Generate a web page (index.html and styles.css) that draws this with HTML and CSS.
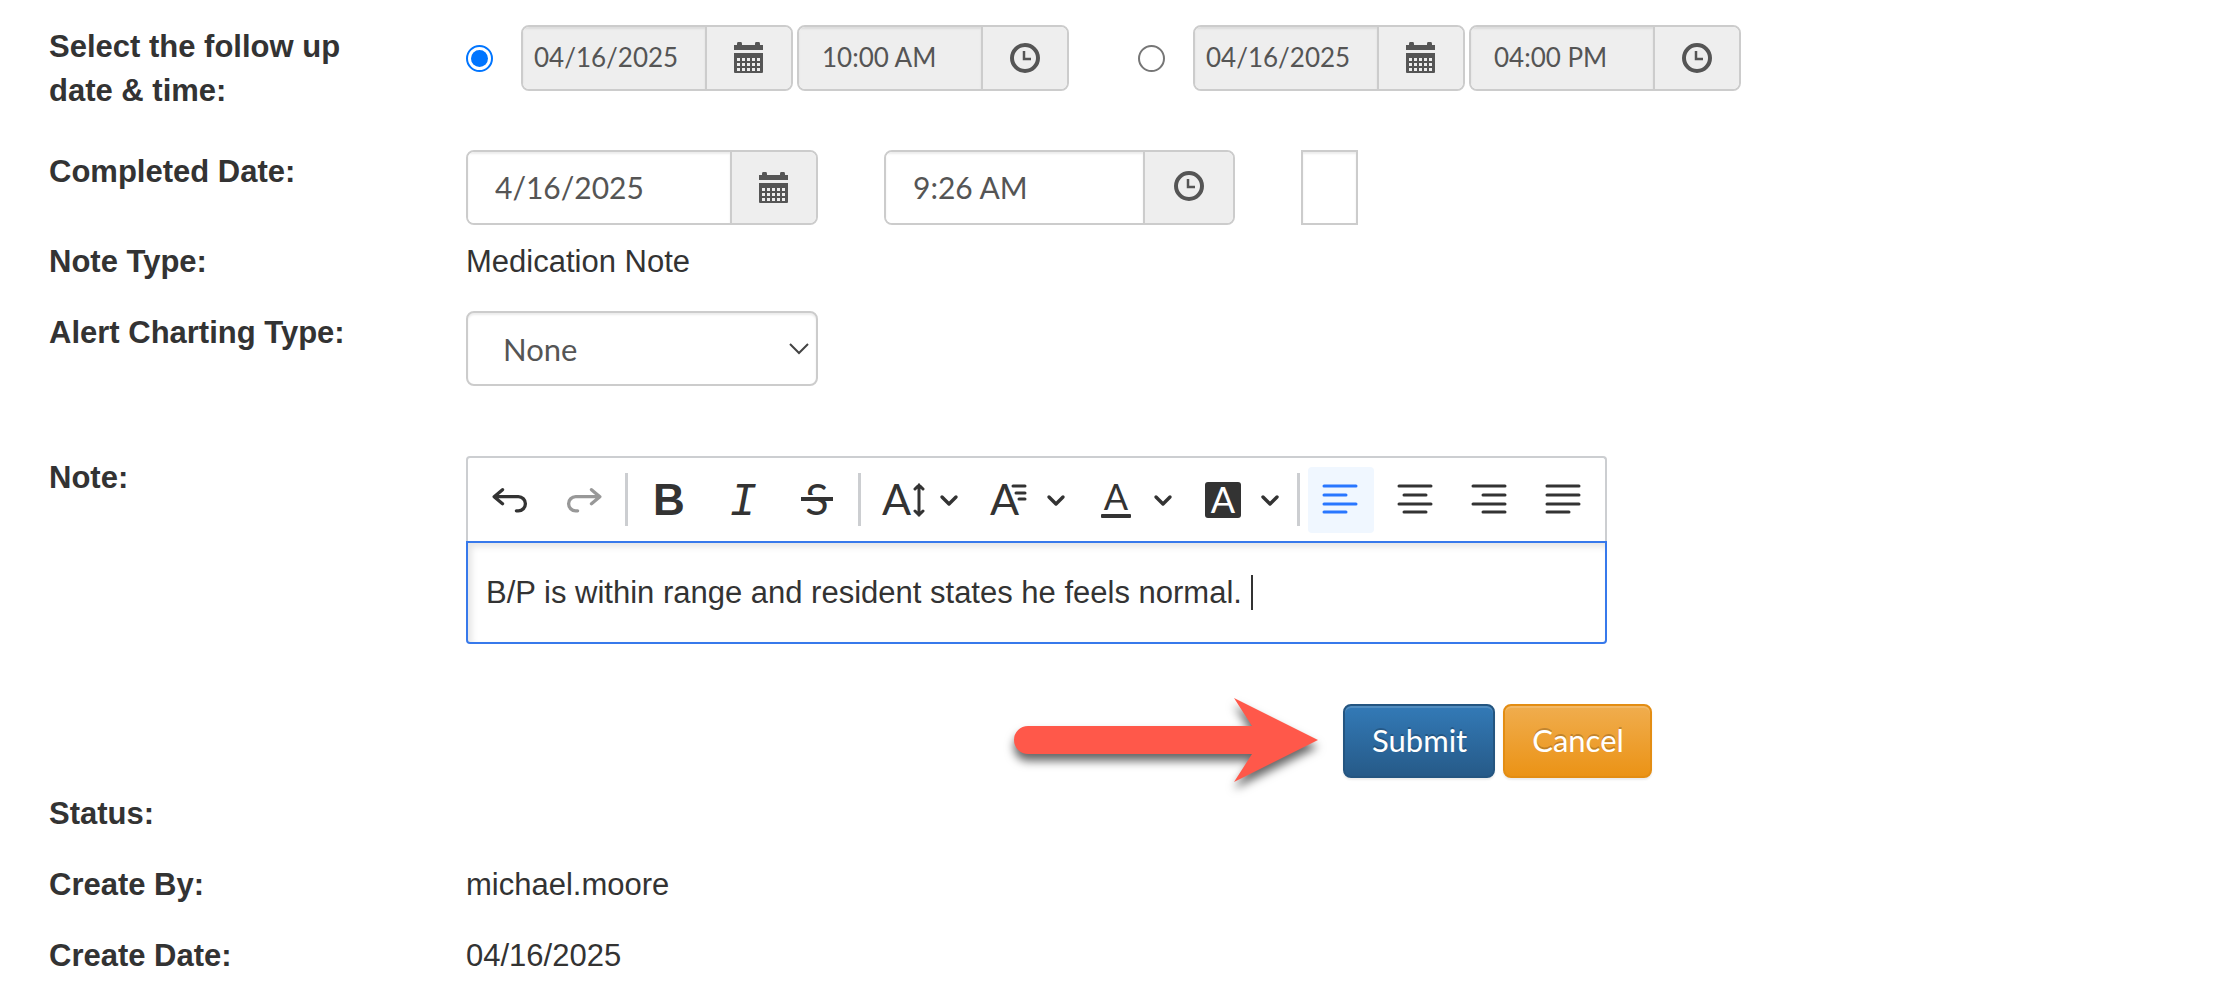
FILE: index.html
```html
<!DOCTYPE html>
<html lang="en">
<head>
    <meta charset="UTF-8">
    <meta name="viewport" content="width=device-width, initial-scale=1.0">
    <title>Follow Up Note</title>
    <link rel="stylesheet" href="styles.css">
</head>
<body>
    <!-- shared icons -->
    <svg class="sprite" aria-hidden="true">
        <symbol id="calendar" viewBox="0 0 30 32">
            <path d="M0 3h3V2a2 2 0 0 1 5 0v1h13V2a2 2 0 0 1 5 0v1h3v5H0z"/>
            <path fill-rule="evenodd" d="M0 11h29v19a1 1 0 0 1-1 1H1a1 1 0 0 1-1-1zM3 16v3h3v-3zm5 0v3h3v-3zm5 0v3h3v-3zm5 0v3h3v-3zm5 0v3h3v-3zM3 21v3h3v-3zm5 0v3h3v-3zm5 0v3h3v-3zm5 0v3h3v-3zm5 0v3h3v-3zM3 26v3h3v-3zm5 0v3h3v-3zm5 0v3h3v-3zm5 0v3h3v-3zm5 0v3h3v-3z"/>
        </symbol>
        <symbol id="clock" viewBox="0 0 30 30">
            <circle cx="15" cy="15" r="13" fill="none" stroke="currentColor" stroke-width="4"/>
            <path d="M14 8v8h7" fill="none" stroke="currentColor" stroke-width="2.500"/>
        </symbol>
        <symbol id="chevron" viewBox="0 0 20 14">
            <path d="M3 4l7 7 7-7" fill="none" stroke="currentColor" stroke-width="3.400" stroke-linecap="round" stroke-linejoin="round"/>
        </symbol>
    </svg>

    <form class="note-form" id="form">
        <div class="row row-followup">
            <div class="label" id="followup-label">Select the follow up date &amp; time:</div>
            <div class="followup" role="radiogroup" aria-labelledby="followup-label">
                <div class="option">
                    <input class="radio" type="radio" name="followup" id="followup1" aria-label="First follow up" checked>
                    <div class="group group-sm">
                        <input class="field field-date" type="text" value="04/16/2025" aria-label="First follow up date" readonly>
                        <button class="addon" type="button" aria-label="Pick date"><svg class="icon-calendar"><use href="#calendar"/></svg></button>
                    </div>
                    <div class="group group-sm">
                        <input class="field" type="text" value="10:00 AM" aria-label="First follow up time" readonly>
                        <button class="addon" type="button" aria-label="Pick time"><svg class="icon-clock"><use href="#clock"/></svg></button>
                    </div>
                </div>
                <div class="option">
                    <input class="radio" type="radio" name="followup" id="followup2" aria-label="Second follow up">
                    <div class="group group-sm">
                        <input class="field field-date" type="text" value="04/16/2025" aria-label="Second follow up date" readonly>
                        <button class="addon" type="button" aria-label="Pick date"><svg class="icon-calendar"><use href="#calendar"/></svg></button>
                    </div>
                    <div class="group group-sm">
                        <input class="field" type="text" value="04:00 PM" aria-label="Second follow up time" readonly>
                        <button class="addon" type="button" aria-label="Pick time"><svg class="icon-clock"><use href="#clock"/></svg></button>
                    </div>
                </div>
            </div>
        </div>

        <div class="row row-completed">
            <label class="label" for="completed">Completed Date:</label>
            <div class="completed">
                <div class="group">
                    <input class="field" type="text" id="completed" value="4/16/2025">
                    <button class="addon" type="button" aria-label="Pick date"><svg class="icon-calendar"><use href="#calendar"/></svg></button>
                </div>
                <div class="group group-time">
                    <input class="field" type="text" value="9:26 AM" aria-label="Completed time">
                    <button class="addon" type="button" aria-label="Pick time"><svg class="icon-clock"><use href="#clock"/></svg></button>
                </div>
                <input class="field-box" type="text" aria-label="Initials">
            </div>
        </div>

        <div class="row">
            <div class="label">Note Type:</div>
            <div class="value">Medication Note</div>
        </div>

        <div class="row row-alert">
            <label class="label" for="alert">Alert Charting Type:</label>
            <div class="select">
                <select id="alert">
                    <option>None</option>
                </select>
                <svg class="select-arrow" viewBox="0 0 20 12"><path d="M1 1l9 9 9-9"/></svg>
            </div>
        </div>

        <div class="row row-note">
            <div class="label" id="note-label">Note:</div>
            <div class="editor">
                <div class="toolbar" role="toolbar" aria-label="Editor toolbar">
                    <button class="tool" type="button" aria-label="Undo">
                        <svg viewBox="0 0 20 20"><path class="line" d="M6.600 5.300L2.800 8.500l3.800 3.200M3 8.500h10.800a3.200 3.200 0 0 1 0 6.400h-.9"/></svg>
                    </button>
                    <button class="tool" type="button" aria-label="Redo" disabled>
                        <svg viewBox="0 0 20 20"><path class="line" d="M13.400 5.300l3.800 3.200-3.800 3.200M17 8.500H6.200a3.200 3.200 0 0 0 0 6.400h.9"/></svg>
                    </button>
                    <span class="separator"></span>
                    <button class="tool" type="button" aria-label="Bold">
                        <svg viewBox="0 0 44 44"><text class="glyph-bold" x="22" y="37" text-anchor="middle">B</text></svg>
                    </button>
                    <button class="tool" type="button" aria-label="Italic">
                        <svg viewBox="0 0 44 44"><text class="glyph-italic" x="22" y="37" text-anchor="middle">I</text></svg>
                    </button>
                    <button class="tool" type="button" aria-label="Strikethrough">
                        <svg viewBox="0 0 44 44"><text class="glyph" x="22" y="37" text-anchor="middle">S</text><path fill="#fff" d="M6 17h32v3H6zM6 22h17v4H6z"/><path d="M6 19h32v4H6z"/></svg>
                    </button>
                    <span class="separator"></span>
                    <button class="tool tool-menu" type="button" aria-label="Font Size">
                        <svg viewBox="0 0 44 44"><text class="glyph" x="2" y="37">A</text><path class="thin" d="M39 7v30M35 11l4-4 4 4M35 33l4 4 4-4"/></svg>
                        <svg class="chevron"><use href="#chevron"/></svg>
                    </button>
                    <button class="tool tool-menu" type="button" aria-label="Font Family">
                        <svg viewBox="0 0 44 44"><text class="glyph" x="3" y="37">A</text><path class="thin" d="M26 8h12M29 15h9M32 21h6"/></svg>
                        <svg class="chevron"><use href="#chevron"/></svg>
                    </button>
                    <button class="tool tool-menu" type="button" aria-label="Font Color">
                        <svg viewBox="0 0 44 44"><text class="glyph-small" x="22" y="32" text-anchor="middle">A</text><rect x="7" y="36" width="30" height="4" rx="1"/></svg>
                        <svg class="chevron"><use href="#chevron"/></svg>
                    </button>
                    <button class="tool tool-menu" type="button" aria-label="Font Background Color">
                        <svg viewBox="0 0 44 44"><rect x="4" y="4" width="36" height="36" rx="3"/><text class="glyph-small" fill="#fff" x="22" y="35" text-anchor="middle">A</text></svg>
                        <svg class="chevron"><use href="#chevron"/></svg>
                    </button>
                    <span class="separator"></span>
                    <button class="tool active" type="button" aria-label="Align left">
                        <svg viewBox="0 0 44 44"><path class="bars" d="M5 8h32M5 17h22M5 26h32M5 34h22"/></svg>
                    </button>
                    <button class="tool" type="button" aria-label="Align center">
                        <svg viewBox="0 0 44 44"><path class="bars" d="M6 8h32M11 17h22M6 26h32M11 34h22"/></svg>
                    </button>
                    <button class="tool" type="button" aria-label="Align right">
                        <svg viewBox="0 0 44 44"><path class="bars" d="M6 8h32M16 17h22M6 26h32M16 34h22"/></svg>
                    </button>
                    <button class="tool" type="button" aria-label="Justify">
                        <svg viewBox="0 0 44 44"><path class="bars" d="M6 8h32M6 17h32M6 26h32M6 34h22"/></svg>
                    </button>
                </div>
                <div class="editable" contenteditable="true" role="textbox" aria-labelledby="note-label">B/P is within range and resident states he feels normal.&nbsp;<span class="caret"></span></div>
            </div>
        </div>

        <div class="actions">
            <svg class="arrow" viewBox="0 0 304 90" aria-hidden="true">
                <path d="M14 30h224L220 2l84 42-84 42 18-28H14a14 14 0 0 1 0-28z"/>
            </svg>
            <div class="buttons">
                <button class="btn btn-primary" type="submit">Submit</button>
                <button class="btn btn-warning" type="button">Cancel</button>
            </div>
        </div>

        <div class="row">
            <div class="label">Status:</div>
            <div class="value"></div>
        </div>
        <div class="row">
            <div class="label">Create By:</div>
            <div class="value">michael.moore</div>
        </div>
        <div class="row">
            <div class="label">Create Date:</div>
            <div class="value">04/16/2025</div>
        </div>
    </form>
</body>
</html>
```

FILE: styles.css
```css
* {
    box-sizing: border-box;
}

body {
    margin: 0;
    background-color: #fff;
    color: #333;
    font-family: "Liberation Sans", Arial, sans-serif;
    font-size: 31px;
    line-height: 44px;
}

input, select, button {
    margin: 0;
    font-family: Lato, sans-serif;
    font-size: 31px;
    color: #555;
}

svg {
    display: block;
    fill: currentColor;
}

.sprite {
    display: none;
}

.note-form {
    padding: 25px 49px;
}

.row {
    display: grid;
    grid-template-columns: 417px 1fr;
    align-items: start;
    margin-bottom: 27px;
}

.row-followup {
    margin-bottom: 37px;
}

.row-completed {
    margin-bottom: 15px;
}

.row-alert {
    margin-bottom: 70px;
}

.row-note {
    margin-bottom: 60px;
}

.label {
    padding-right: 80px;
    font-weight: bold;
}

/* inputs with a picker button */
.followup {
    display: flex;
    flex-wrap: wrap;
    gap: 69px;
}

.option {
    display: flex;
    align-items: center;
    gap: 4px;
}

.radio {
    width: 27px;
    height: 27px;
    margin: 0 24px 0 0;
    border: 2px solid #767676;
    border-radius: 50%;
    background-color: #fff;
    appearance: none;
}

.radio:checked {
    padding: 3px;
    border-color: #0075ff;
    background-color: #0075ff;
    background-clip: content-box;
}

.completed {
    display: flex;
    flex-wrap: wrap;
    gap: 66px;
}

.group {
    display: flex;
    width: 352px;
    height: 75px;
    border: 2px solid #ccc;
    border-radius: 8px;
    overflow: hidden;
}

.field {
    flex: 1;
    min-width: 0;
    padding: 0 0 2px 27px;
    border: 0;
    background-color: #fff;
    box-shadow: inset 0 2px 2px rgba(0, 0, 0, 0.075);
    font-size: 30px;
}

.addon {
    display: flex;
    justify-content: center;
    align-items: center;
    width: 86px;
    padding: 0;
    border: 0;
    border-left: 2px solid #ccc;
    background-color: #eee;
}

.group-time {
    width: 351px;
}

.group-time .addon {
    width: 90px;
    padding-bottom: 3px;
}

.group-sm {
    width: 272px;
    height: 66px;
}

.group-sm .field {
    padding-left: 23px;
    background-color: #eee;
    font-size: 26px;
}

.group-sm .field-date {
    padding-left: 11px;
}

.icon-calendar {
    width: 30px;
    height: 32px;
}

.icon-clock {
    width: 30px;
    height: 30px;
}

.field-box {
    width: 57px;
    height: 75px;
    border: 2px solid #ccc;
    box-shadow: inset 0 2px 2px rgba(0, 0, 0, 0.075);
}

.select {
    display: grid;
    align-items: center;
    width: 352px;
}

.select select {
    grid-area: 1 / 1;
    height: 75px;
    padding: 0 35px;
    border: 2px solid #ccc;
    border-radius: 8px;
    background-color: #fff;
    box-shadow: inset 0 2px 2px rgba(0, 0, 0, 0.075);
    appearance: none;
}

.select-arrow {
    grid-area: 1 / 1;
    justify-self: end;
    width: 20px;
    height: 12px;
    margin-right: 9px;
    fill: none;
    stroke: #444;
    stroke-width: 2;
    pointer-events: none;
}

/* editor */
.editor {
    max-width: 1141px;
}

.toolbar {
    display: flex;
    align-items: center;
    gap: 8px;
    height: 85px;
    padding: 0 9px;
    border: 2px solid #ccced1;
    border-bottom: 0;
    border-radius: 4px 4px 0 0;
}

.tool {
    display: flex;
    align-items: center;
    flex-shrink: 0;
    width: 66px;
    height: 66px;
    padding: 0 11px;
    border: 0;
    border-radius: 4px;
    background: none;
    color: #333;
}

.tool svg {
    flex-shrink: 0;
    width: 44px;
    height: 44px;
    overflow: visible;
}

.tool:disabled svg {
    opacity: 0.5;
}

.tool-menu {
    width: 99px;
    gap: 15px;
}

.tool .chevron {
    width: 20px;
    height: 14px;
}

.tool.active {
    background-color: #f0f7ff;
    color: #2977ff;
}

.separator {
    width: 3px;
    height: 53px;
    background-color: #ccced1;
}

.line {
    fill: none;
    stroke: currentColor;
    stroke-width: 1.5;
    stroke-linecap: round;
    stroke-linejoin: round;
}

.thin {
    fill: none;
    stroke: currentColor;
    stroke-width: 3;
    stroke-linecap: round;
}

.bars {
    fill: none;
    stroke: currentColor;
    stroke-width: 3;
    stroke-linecap: round;
}

.glyph {
    font: 43px Lato, sans-serif;
}

.glyph-small {
    font: 36px Lato, sans-serif;
}

.glyph-bold {
    font: bold 44px "Liberation Sans", sans-serif;
}

.glyph-italic {
    font: italic 46px "Liberation Mono", monospace;
}

.editable {
    min-height: 103px;
    padding: 28px 18px 27px;
    border: 2px solid #3779eb;
    border-radius: 0 0 4px 4px;
    box-shadow: inset 4px 4px 6px rgba(0, 0, 0, 0.1);
    outline: none;
}

.caret {
    display: inline-block;
    width: 2px;
    height: 35px;
    background-color: #333;
    vertical-align: -7px;
}

/* buttons */
.actions {
    display: flex;
    align-items: center;
    gap: 25px;
    margin-bottom: 14px;
    padding-left: 965px;
    height: 74px;
}

.arrow {
    flex-shrink: 0;
    width: 304px;
    height: 90px;
    overflow: visible;
    fill: #ff584a;
    filter: drop-shadow(0 7px 5px rgba(0, 0, 0, 0.6));
}

.buttons {
    display: flex;
    gap: 8px;
}

.btn {
    height: 74px;
    padding: 0 26px 2px 27px;
    border: 2px solid #245580;
    border-radius: 8px;
    color: #fff;
    text-shadow: 0 -2px 0 rgba(0, 0, 0, 0.2);
    box-shadow: inset 0 2px 0 rgba(255, 255, 255, 0.15), 0 2px 2px rgba(0, 0, 0, 0.075);
    cursor: pointer;
}

.btn-primary {
    background-image: linear-gradient(#337ab7, #265a88);
}

.btn-warning {
    border-color: #e38d13;
    background-image: linear-gradient(#f0ad4e, #eb9316);
}
```
